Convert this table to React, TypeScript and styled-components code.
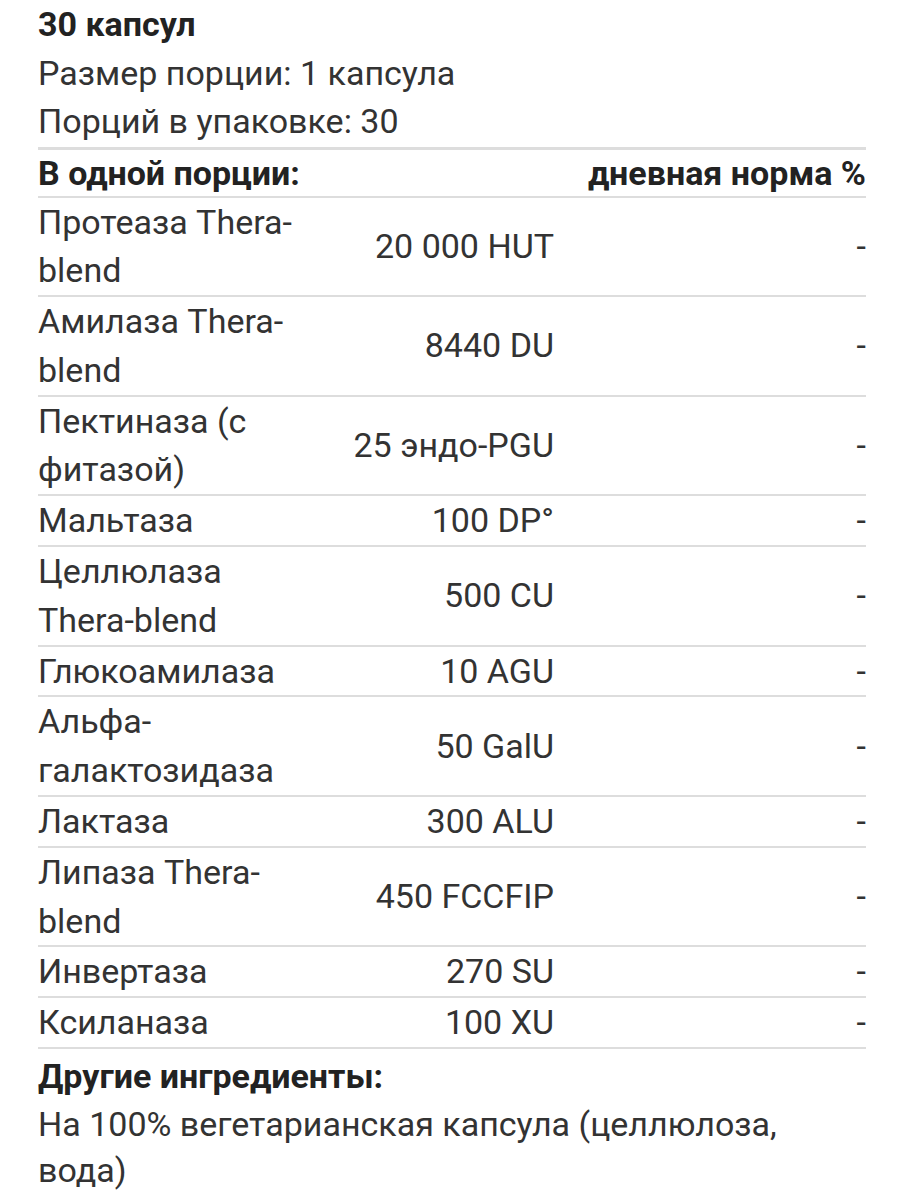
import styled, { createGlobalStyle } from "styled-components";

const GlobalStyle = createGlobalStyle`
  body {
    margin: 0;
    background: #ffffff;
    font-family: Roboto, "Noto Sans", sans-serif;
    color: #333333;
  }
`;

const Panel = styled.div`
  width: 828px;
  padding: 0 34px 0 38px;
  font-size: 34px;
  line-height: 48.5px;
`;

const Title = styled.div`
  font-weight: 700;
  color: #222222;
`;

const Line = styled.div``;

const Table = styled.table`
  width: 100%;
  border-collapse: collapse;
  border-top: 3px solid #dddddd;
  margin-top: 1px;
`;

const Row = styled.tr`
  border-bottom: 2px solid #dddddd;
`;

const HeadCell = styled.th<{ $align?: string }>`
  padding: 0;
  line-height: 46px;
  font-weight: 700;
  color: #222222;
  text-align: ${(p) => p.$align || "left"};
`;

const Cell = styled.td<{ $align?: string; $width?: string }>`
  padding: 0;
  line-height: 48.8px;
  vertical-align: middle;
  text-align: ${(p) => p.$align || "left"};
  width: ${(p) => p.$width || "auto"};
`;

const Subtitle = styled.div`
  font-weight: 700;
  color: #222222;
  margin-top: 3px;
`;

const Note = styled.div`
  line-height: 46px;
`;

const rows: [string, string][] = [
  ["Протеаза Thera-blend", "20 000 HUT"],
  ["Амилаза Thera-blend", "8440 DU"],
  ["Пектиназа (с фитазой)", "25 эндо-PGU"],
  ["Мальтаза", "100 DP°"],
  ["Целлюлаза Thera-blend", "500 CU"],
  ["Глюкоамилаза", "10 AGU"],
  ["Альфа-галактозидаза", "50 GalU"],
  ["Лактаза", "300 ALU"],
  ["Липаза Thera-blend", "450 FCCFIP"],
  ["Инвертаза", "270 SU"],
  ["Ксиланаза", "100 XU"],
];

export default function App() {
  return (
    <>
      <GlobalStyle />
      <Panel>
        <Title>30 капсул</Title>
        <Line>Размер порции: 1 капсула</Line>
        <Line>Порций в упаковке: 30</Line>
        <Table>
          <thead>
            <Row>
              <HeadCell colSpan={2}>В одной порции:</HeadCell>
              <HeadCell $align="right">дневная норма %</HeadCell>
            </Row>
          </thead>
          <tbody>
            {rows.map(([name, amount]) => (
              <Row key={name}>
                <Cell $width="270px">{name}</Cell>
                <Cell $align="right" $width="246px">
                  {amount}
                </Cell>
                <Cell $align="right">-</Cell>
              </Row>
            ))}
          </tbody>
        </Table>
        <Subtitle>Другие ингредиенты:</Subtitle>
        <Note>На 100% вегетарианская капсула (целлюлоза, вода)</Note>
      </Panel>
    </>
  );
}
